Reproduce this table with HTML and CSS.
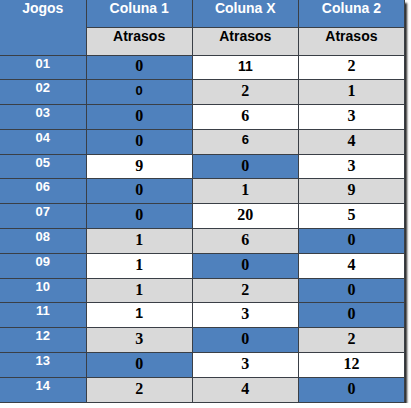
FILE: index.html
```html
<!DOCTYPE html>
<html>
<head>
<meta charset="utf-8">
<link rel="stylesheet" href="styles.css">
</head>
<body>
<table class="grid">
  <colgroup>
    <col class="c-jogos"><col class="c-col"><col class="c-col"><col class="c-col">
  </colgroup>
  <thead>
    <tr class="h1">
      <th rowspan="2" class="blue head">Jogos</th>
      <th class="blue head">Coluna 1</th>
      <th class="blue head">Coluna X</th>
      <th class="blue head">Coluna 2</th>
    </tr>
    <tr class="h2">
      <th class="gray sub">Atrasos</th>
      <th class="gray sub">Atrasos</th>
      <th class="gray sub">Atrasos</th>
    </tr>
  </thead>
  <tbody>
    <tr><th class="blue lbl">01</th><td class="blue">0</td><td class="white sans">11</td><td class="white">2</td></tr>
    <tr><th class="blue lbl">02</th><td class="blue sans small">0</td><td class="gray">2</td><td class="gray">1</td></tr>
    <tr><th class="blue lbl">03</th><td class="blue">0</td><td class="white">6</td><td class="white">3</td></tr>
    <tr><th class="blue lbl">04</th><td class="blue">0</td><td class="gray sans small top">6</td><td class="gray">4</td></tr>
    <tr><th class="blue lbl">05</th><td class="white">9</td><td class="blue">0</td><td class="white">3</td></tr>
    <tr><th class="blue lbl">06</th><td class="blue">0</td><td class="gray">1</td><td class="gray">9</td></tr>
    <tr><th class="blue lbl">07</th><td class="blue">0</td><td class="white">20</td><td class="white">5</td></tr>
    <tr><th class="blue lbl">08</th><td class="gray">1</td><td class="gray">6</td><td class="blue">0</td></tr>
    <tr><th class="blue lbl">09</th><td class="white">1</td><td class="blue">0</td><td class="white">4</td></tr>
    <tr><th class="blue lbl">10</th><td class="gray">1</td><td class="gray">2</td><td class="blue">0</td></tr>
    <tr><th class="blue lbl">11</th><td class="white sans top">1</td><td class="white">3</td><td class="blue">0</td></tr>
    <tr><th class="blue lbl">12</th><td class="gray">3</td><td class="blue">0</td><td class="gray">2</td></tr>
    <tr><th class="blue lbl">13</th><td class="blue">0</td><td class="white">3</td><td class="white">12</td></tr>
    <tr><th class="blue lbl">14</th><td class="gray">2</td><td class="gray">4</td><td class="blue">0</td></tr>
  </tbody>
</table>
</body>
</html>
```

FILE: styles.css
```css
html, body {
  margin: 0;
  padding: 0;
  background: #ffffff;
}

.grid {
  border-collapse: collapse;
  table-layout: fixed;
  width: 405px;
  box-shadow: 2px 3px 2px rgba(0, 0, 0, 0.85);
  font-family: "Liberation Serif", "Times New Roman", serif;
}

.c-jogos { width: 86px; }
.c-col { width: 106px; }

.grid th, .grid td {
  border: 1px solid #3a3f46;
  padding: 0;
  text-align: center;
  overflow: hidden;
  white-space: nowrap;
}

.grid thead tr:first-child th { border-top: none; }
.grid tr > :first-child { border-left: none; }

.blue { background: #4f81bd; }
.gray { background: #d9d9d9; }
.white { background: #ffffff; }

.h1 { height: 27px; }
.h2 { height: 28px; }

.head {
  font-family: "Liberation Sans", Arial, sans-serif;
  font-weight: bold;
  font-size: 14px;
  line-height: 16px;
  color: #ffffff;
  vertical-align: top;
  padding-top: 1px;
}

.sub {
  font-family: "Liberation Sans", Arial, sans-serif;
  font-weight: bold;
  font-size: 14px;
  line-height: 16px;
  color: #000000;
  vertical-align: top;
  padding-top: 2px;
  border-top-color: #c8c8c8;
}

.grid tbody tr { height: 24.8px; }

.lbl {
  font-family: "Liberation Sans", Arial, sans-serif;
  font-weight: bold;
  font-size: 13px;
  line-height: 15px;
  color: #ffffff;
  vertical-align: top;
  padding-top: 1px;
}

.grid td {
  font-weight: bold;
  font-size: 16px;
  line-height: 18px;
  color: #000000;
  vertical-align: middle;
  padding-bottom: 2px;
}

.grid td.sans {
  font-family: "Liberation Sans", Arial, sans-serif;
  font-size: 14px;
}

.grid td.small { font-size: 13px; }
.grid td.top { vertical-align: top; padding-top: 1px; }
```
